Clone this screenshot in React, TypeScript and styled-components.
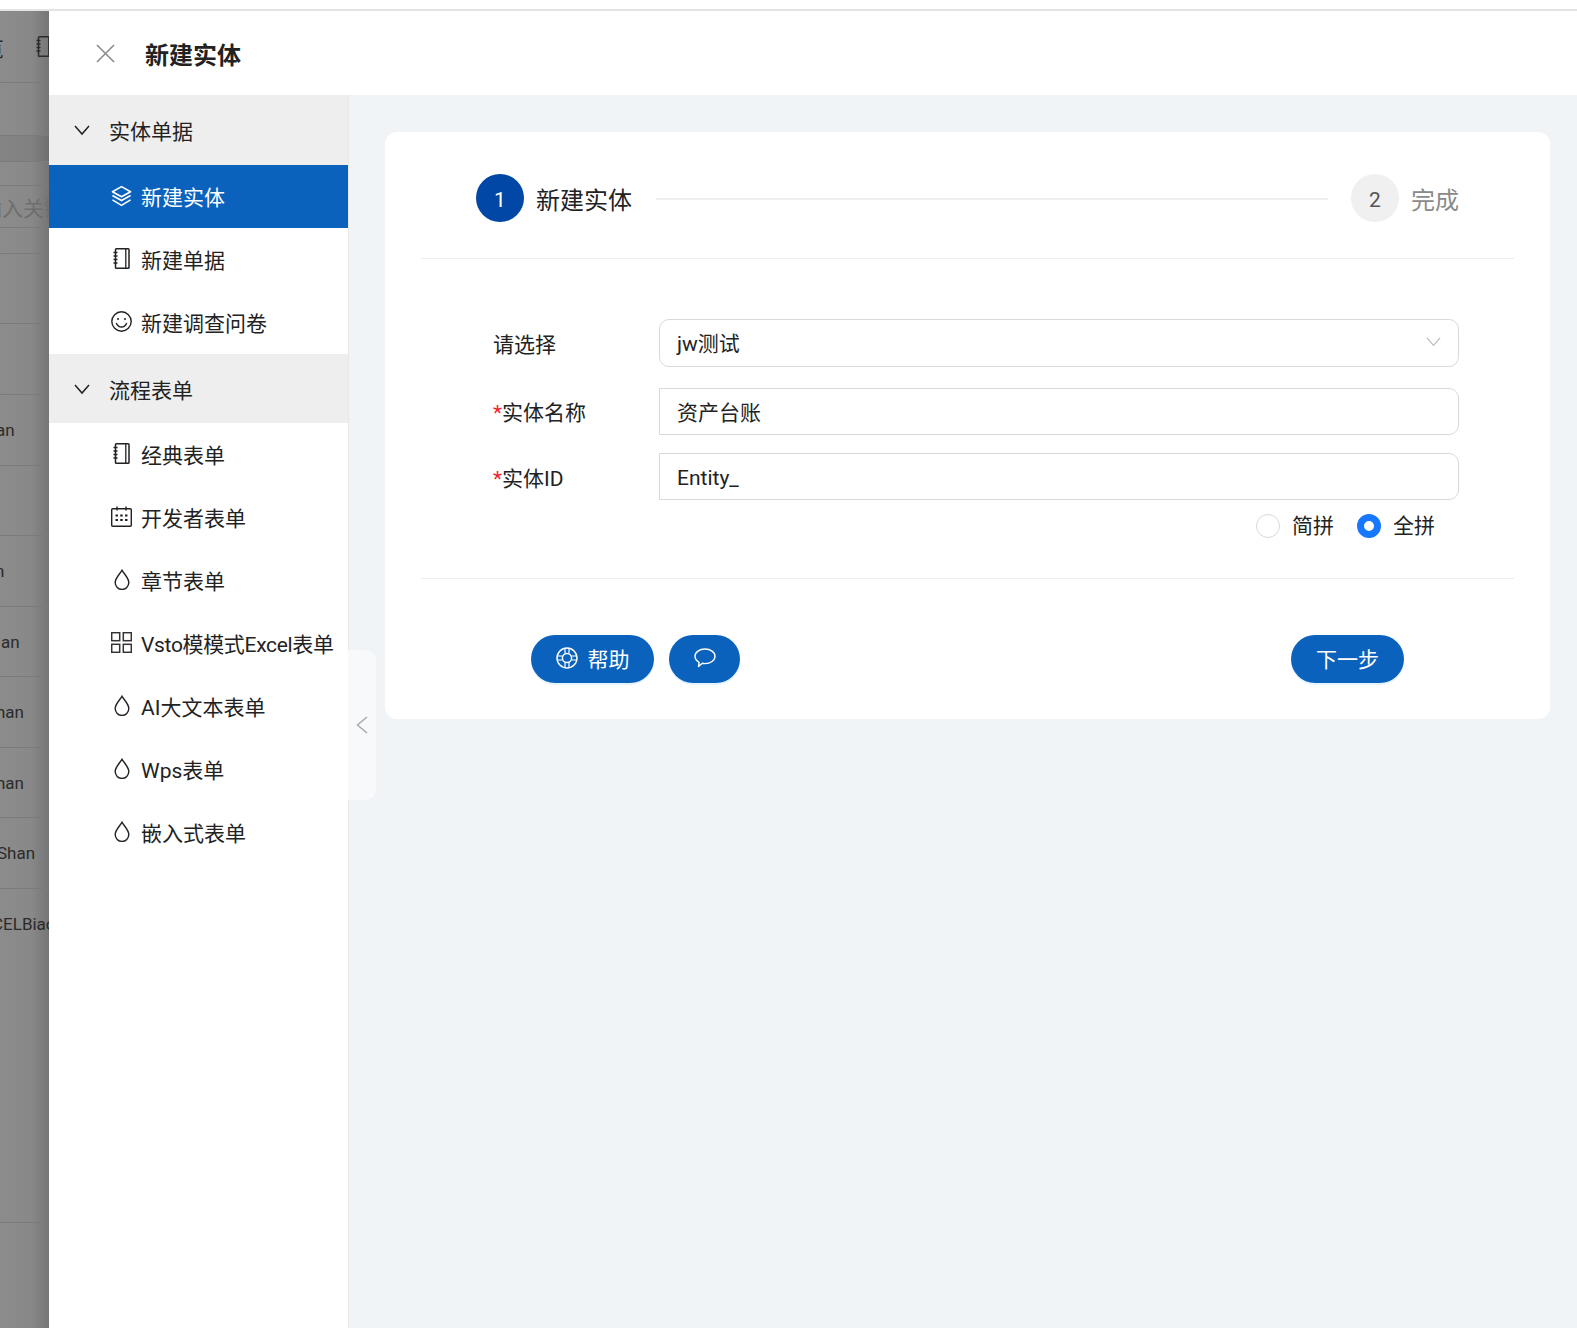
import React from "react";
import styled, { createGlobalStyle } from "styled-components";

const GlobalStyle = createGlobalStyle`
  html, body, #root { margin: 0; padding: 0; height: 100%; }
  body {
    font-family: Roboto, "Noto Sans CJK SC", sans-serif;
    color: #222;
    background: #fff;
  }
`;

const Page = styled.div`
  display: flex;
  flex-direction: column;
  height: 100vh;
  overflow: hidden;
`;

const TopStrip = styled.div`
  flex: none;
  height: 9px;
  border-bottom: 2px solid #e3e3e3;
`;

const Stage = styled.div`
  flex: 1;
  display: flex;
  min-height: 0;
`;

// page behind the drawer, dimmed by the mask
const Backdrop = styled.div`
  flex: none;
  width: 49px;
  overflow: hidden;
  display: flex;
  flex-direction: column;
  background: linear-gradient(to right, #8c8c8c 0, #888 65%, #757575 100%);
  color: #2b2b2b;
  font-size: 17px;
`;

const BackRow = styled.div<{ $h: number; $dark?: boolean; $top?: boolean }>`
  flex: none;
  box-sizing: border-box;
  height: ${(p) => p.$h}px;
  border-bottom: 1px solid #7b7b7b;
  display: flex;
  align-items: ${(p) => (p.$top ? "flex-start" : "center")};
  padding-top: ${(p) => (p.$top ? "25px" : "0")};
  white-space: nowrap;
  background: ${(p) => (p.$dark ? "rgba(0, 0, 0, 0.05)" : "transparent")};
`;

const BackText = styled.span<{ $shift: number; $color?: string; $size?: number }>`
  margin-left: ${(p) => p.$shift}px;
  color: ${(p) => p.$color || "inherit"};
  font-size: ${(p) => p.$size || 17}px;
`;

const BackNote = styled.span`
  margin-left: 32px;
  display: flex;
`;

const Drawer = styled.div`
  flex: 1;
  min-width: 0;
  display: flex;
  flex-direction: column;
  background: #fff;
`;

const DrawerHeader = styled.div`
  flex: none;
  height: 84px;
  display: flex;
  align-items: center;
  gap: 30px;
  padding-left: 47px;
`;

const DrawerTitle = styled.div`
  font-size: 24px;
  font-weight: 700;
  color: #222;
`;

const DrawerBody = styled.div`
  flex: 1;
  display: flex;
  min-height: 0;
`;

const Sidebar = styled.div`
  flex: none;
  width: 300px;
  box-sizing: border-box;
  border-right: 1px solid #e9e9e9;
  background: #fff;
`;

const GroupHead = styled.div<{ $h: number }>`
  height: ${(p) => p.$h}px;
  display: flex;
  align-items: center;
  gap: 19px;
  padding-left: 25px;
  background: #eee;
  font-size: 21px;
  color: #222;
`;

const MenuItem = styled.div<{ $active?: boolean; $tight?: boolean }>`
  box-sizing: border-box;
  height: 63px;
  display: flex;
  align-items: center;
  gap: 9px;
  padding: 0 0 2px 62px;
  font-size: 21px;
  white-space: nowrap;
  letter-spacing: ${(p) => (p.$tight ? "-0.33px" : "normal")};
  color: ${(p) => (p.$active ? "#fff" : "#222")};
  background: ${(p) => (p.$active ? "#0a62bd" : "#fff")};
`;

const IconSlot = styled.span`
  flex: none;
  width: 21px;
  height: 22px;
  display: flex;
  align-items: center;
  justify-content: center;
`;

const Main = styled.div`
  position: relative;
  flex: 1;
  min-width: 0;
  box-sizing: border-box;
  padding: 37px 27px 0 36px;
  background: #f0f4f7;
`;

const CollapseTab = styled.div`
  position: absolute;
  left: -1px;
  top: 555px;
  width: 28px;
  height: 150px;
  display: flex;
  align-items: center;
  padding-left: 8px;
  box-sizing: border-box;
  background: #f7f9fb;
  border-radius: 0 10px 10px 0;
`;

const Card = styled.div`
  box-sizing: border-box;
  height: 587px;
  padding: 0 36px;
  background: #fff;
  border-radius: 12px;
`;

const Steps = styled.div`
  display: flex;
  align-items: center;
  padding: 42px 55px 36px;
  border-bottom: 1px solid #eee;
`;

const StepDot = styled.div<{ $on?: boolean }>`
  flex: none;
  box-sizing: border-box;
  width: 48px;
  height: 48px;
  padding-top: 3px;
  border-radius: 50%;
  display: flex;
  align-items: center;
  justify-content: center;
  font-size: 21px;
  background: ${(p) => (p.$on ? "#0047a6" : "#f0f0f0")};
  color: ${(p) => (p.$on ? "#fff" : "#555")};
`;

const StepLabel = styled.div<{ $on?: boolean }>`
  margin-left: 12px;
  font-size: 24px;
  color: ${(p) => (p.$on ? "#222" : "#8a8a8a")};
`;

const StepLine = styled.div`
  flex: 1;
  height: 2px;
  margin: 2px 23px 0 24px;
  background: #eee;
`;

const Form = styled.div`
  display: flex;
  flex-direction: column;
  padding: 60px 55px 40px 72px;
  border-bottom: 1px solid #eee;
`;

const FormRow = styled.div<{ $mt?: number }>`
  display: flex;
  align-items: center;
  margin-top: ${(p) => p.$mt || 0}px;
`;

const FieldLabel = styled.div<{ $lift?: boolean }>`
  flex: none;
  width: 166px;
  padding-bottom: ${(p) => (p.$lift ? "2px" : "0")};
  font-size: 21px;
  color: #222;
`;

const Star = styled.span`
  color: #f5222d;
`;

const Field = styled.div<{ $h: number; $rounded?: boolean; $lift?: boolean; $drop?: boolean }>`
  flex: 1;
  box-sizing: border-box;
  height: ${(p) => p.$h}px;
  display: flex;
  align-items: center;
  justify-content: space-between;
  padding: ${(p) => (p.$drop ? "2px" : "0")} 17px ${(p) => (p.$lift ? "2px" : "0")};
  border: 1.5px solid #d9d9d9;
  border-radius: ${(p) => (p.$rounded ? "10px" : "0 10px 10px 0")};
  font-size: 21px;
  color: #222;
  background: #fff;
`;

const RadioRow = styled.div`
  display: flex;
  justify-content: flex-end;
  gap: 23px;
  height: 24px;
  margin-top: 14px;
  padding-right: 24px;
`;

const RadioItem = styled.div`
  display: flex;
  align-items: center;
  gap: 12px;
  height: 24px;
  font-size: 21px;
  line-height: 24px;
  color: #222;
`;

const RadioMark = styled.span<{ $on?: boolean }>`
  box-sizing: border-box;
  width: 24px;
  height: 24px;
  border-radius: 50%;
  background: #fff;
  border: ${(p) => (p.$on ? "7px solid #1677ff" : "1px solid #d9d9d9")};
`;

const Actions = styled.div`
  display: flex;
  justify-content: space-between;
  padding: 56px 110px 0;
`;

const ActionGroup = styled.div`
  display: flex;
  gap: 15px;
`;

const PillButton = styled.div<{ $w: number }>`
  box-sizing: border-box;
  width: ${(p) => p.$w}px;
  height: 48px;
  padding-bottom: 2px;
  display: flex;
  align-items: center;
  justify-content: center;
  gap: 10px;
  border-radius: 24px;
  background: #0a62bd;
  color: #fff;
  font-size: 21px;
  box-shadow: 0 2px 0 #e6f4ff;
`;

const Notebook = ({ stroke = "#222" }: { stroke?: string }) => (
  <svg width="17" height="21" viewBox="0 0 17 21" fill="none">
    <rect x="2.5" y="0.8" width="13.5" height="19.4" rx="0.8" stroke={stroke} strokeWidth="1.5" />
    <path d="M12.8 1v19" stroke={stroke} strokeWidth="1.3" />
    <path d="M0.5 4.5h4M0.5 8h4M0.5 11.5h4M0.5 15h4" stroke={stroke} strokeWidth="1.3" />
  </svg>
);

const Layers = () => (
  <svg width="22" height="22" viewBox="0 0 22 22" fill="none" stroke="#fff" strokeWidth="1.7" strokeLinejoin="round">
    <path d="M11 1.2l9.5 5.3L11 11.8 1.5 6.5z" />
    <path d="M1.5 10.5l9.5 5.3 9.5-5.3" />
    <path d="M1.5 15l9.5 5.8 9.5-5.8" />
  </svg>
);

const Smile = () => (
  <svg width="21" height="21" viewBox="0 0 21 21" fill="none" stroke="#222" strokeWidth="1.4">
    <circle cx="10.5" cy="10.5" r="9.7" />
    <circle cx="7" cy="8" r="1" fill="#222" stroke="none" />
    <circle cx="14" cy="8" r="1" fill="#222" stroke="none" />
    <path d="M5.5 12.5c1 2.3 3 3.5 5 3.5s4-1.2 5-3.5" strokeLinecap="round" />
  </svg>
);

const Calendar = () => (
  <svg width="21" height="21" viewBox="0 0 21 21" fill="none" stroke="#222" strokeWidth="1.4">
    <rect x="0.7" y="2.7" width="19.6" height="17.6" rx="1" />
    <path d="M6 0.5v4M15 0.5v4" />
    <path d="M4.5 9.5h2.5M9.2 9.5h2.5M14 9.5h2.5M4.5 14h2.5M9.2 14h2.5M14 14h2.5" strokeWidth="2.2" />
  </svg>
);

const Drop = () => (
  <svg width="16" height="21" viewBox="0 0 16 21" fill="none" stroke="#222" strokeWidth="1.4">
    <path d="M8 1.2C6.3 4.5 1.2 9 1.2 13.6a6.8 6.8 0 0 0 13.6 0C14.8 9 9.7 4.5 8 1.2z" />
  </svg>
);

const Squares = () => (
  <svg width="21" height="21" viewBox="0 0 21 21" fill="none" stroke="#333" strokeWidth="1.5">
    <rect x="0.7" y="0.7" width="8" height="8" />
    <rect x="12.3" y="0.7" width="8" height="8" />
    <rect x="0.7" y="12.3" width="8" height="8" />
    <rect x="12.3" y="12.3" width="8" height="8" />
  </svg>
);

const Chevron = ({ size = 16, color = "#222", width = 1.5 }: { size?: number; color?: string; width?: number }) => (
  <svg width={size} height={size * 0.75} viewBox="0 0 16 12" fill="none" stroke={color} strokeWidth={width}>
    <path d="M1 2l7 8 7-8" />
  </svg>
);

const Close = () => (
  <svg width="19" height="19" viewBox="0 0 19 19" fill="none" stroke="#8c8c8c" strokeWidth="1.6">
    <path d="M1 1l17 17M18 1L1 18" />
  </svg>
);

const Buoy = () => (
  <svg width="22" height="22" viewBox="0 0 22 22" fill="none" stroke="#fff">
    <circle cx="11" cy="11" r="10" strokeWidth="1.5" />
    <circle cx="11" cy="11" r="4.6" strokeWidth="1.5" />
    <path d="M9 1.5v5M13 1.5v5M9 15.5v5M13 15.5v5M1.5 9h5M1.5 13h5M15.500 9h5M15.500 13h5" strokeWidth="1.2" />
  </svg>
);

const Bubble = () => (
  <svg width="22" height="20" viewBox="0 0 22 20" fill="none" stroke="#fff" strokeWidth="1.4" strokeLinejoin="round">
    <path d="M11 1c5.500 0 10 3.200 10 7.300s-4.500 7.300-10 7.300c-.9 0-1.800-.1-2.700-.3L4.500 18.500l.6-4.100C2.600 13 1 10.800 1 8.300 1 4.200 5.500 1 11 1z" />
  </svg>
);

const backRows = [
  { h: 53 },
  { h: 26, dark: true },
  { h: 24 },
  { h: 42, text: "输入关键字", shift: -19, color: "#6e6e6e", size: 21 },
  { h: 26 },
  { h: 70 },
  { h: 71 },
  { h: 71, text: "an", shift: -4 },
  { h: 70, text: "1", shift: -8, color: "#3f86c0" },
  { h: 71, text: "n", shift: -5 },
  { h: 70, text: "an", shift: 1 },
  { h: 71, text: "han", shift: -4 },
  { h: 70, text: "han", shift: -4 },
  { h: 71, text: "Shan", shift: -3 },
];

type Entry = { icon: React.ReactNode; label: string; active?: boolean; tight?: boolean };

const entityItems: Entry[] = [
  { icon: <Layers />, label: "新建实体", active: true },
  { icon: <Notebook />, label: "新建单据" },
  { icon: <Smile />, label: "新建调查问卷" },
];

const flowItems: Entry[] = [
  { icon: <Notebook />, label: "经典表单" },
  { icon: <Calendar />, label: "开发者表单" },
  { icon: <Drop />, label: "章节表单" },
  { icon: <Squares />, label: "Vsto模模式Excel表单", tight: true },
  { icon: <Drop />, label: "AI大文本表单" },
  { icon: <Drop />, label: "Wps表单" },
  { icon: <Drop />, label: "嵌入式表单" },
];

const renderItems = (items: Entry[]) =>
  items.map((item) => (
    <MenuItem key={item.label} $active={item.active} $tight={item.tight}>
      <IconSlot>{item.icon}</IconSlot>
      {item.label}
    </MenuItem>
  ));

const App: React.FC = () => {
  return (
    <Page>
      <GlobalStyle />
      <TopStrip />
      <Stage>
        <Backdrop>
          <BackRow $h={72}>
            <BackText $shift={-17} $size={21}>览</BackText>
            <BackNote>
              <Notebook stroke="#2b2b2b" />
            </BackNote>
          </BackRow>
          {backRows.map((row, i) => (
            <BackRow key={i} $h={row.h} $dark={row.dark}>
              {row.text && (
                <BackText $shift={row.shift} $color={row.color} $size={row.size}>
                  {row.text}
                </BackText>
              )}
            </BackRow>
          ))}
          <BackRow $h={334} $top>
            <BackText $shift={-8}>CELBiaoDan</BackText>
          </BackRow>
        </Backdrop>

        <Drawer>
          <DrawerHeader>
            <Close />
            <DrawerTitle>新建实体</DrawerTitle>
          </DrawerHeader>
          <DrawerBody>
            <Sidebar>
              <GroupHead $h={70}>
                <Chevron />
                实体单据
              </GroupHead>
              {renderItems(entityItems)}
              <GroupHead $h={69}>
                <Chevron />
                流程表单
              </GroupHead>
              {renderItems(flowItems)}
            </Sidebar>

            <Main>
              <CollapseTab>
                <svg width="12" height="18" viewBox="0 0 12 18" fill="none" stroke="#aaa" strokeWidth="1.5">
                  <path d="M11 1L1.5 9l9.5 8" />
                </svg>
              </CollapseTab>
              <Card>
                <Steps>
                  <StepDot $on>1</StepDot>
                  <StepLabel $on>新建实体</StepLabel>
                  <StepLine />
                  <StepDot>2</StepDot>
                  <StepLabel>完成</StepLabel>
                </Steps>

                <Form>
                  <FormRow>
                    <FieldLabel>请选择</FieldLabel>
                    <Field $h={48} $rounded $lift>
                      jw测试
                      <Chevron size={15} color="#bbb" width={1.3} />
                    </Field>
                  </FormRow>
                  <FormRow $mt={21}>
                    <FieldLabel $lift>
                      <Star>*</Star>实体名称
                    </FieldLabel>
                    <Field $h={47} $lift>资产台账</Field>
                  </FormRow>
                  <FormRow $mt={18}>
                    <FieldLabel>
                      <Star>*</Star>实体ID
                    </FieldLabel>
                    <Field $h={47} $drop>Entity_</Field>
                  </FormRow>
                  <RadioRow>
                    <RadioItem>
                      <RadioMark />
                      简拼
                    </RadioItem>
                    <RadioItem>
                      <RadioMark $on />
                      全拼
                    </RadioItem>
                  </RadioRow>
                </Form>

                <Actions>
                  <ActionGroup>
                    <PillButton $w={123}>
                      <Buoy />
                      帮助
                    </PillButton>
                    <PillButton $w={71}>
                      <Bubble />
                    </PillButton>
                  </ActionGroup>
                  <PillButton $w={113}>下一步</PillButton>
                </Actions>
              </Card>
            </Main>
          </DrawerBody>
        </Drawer>
      </Stage>
    </Page>
  );
};

export default App;
